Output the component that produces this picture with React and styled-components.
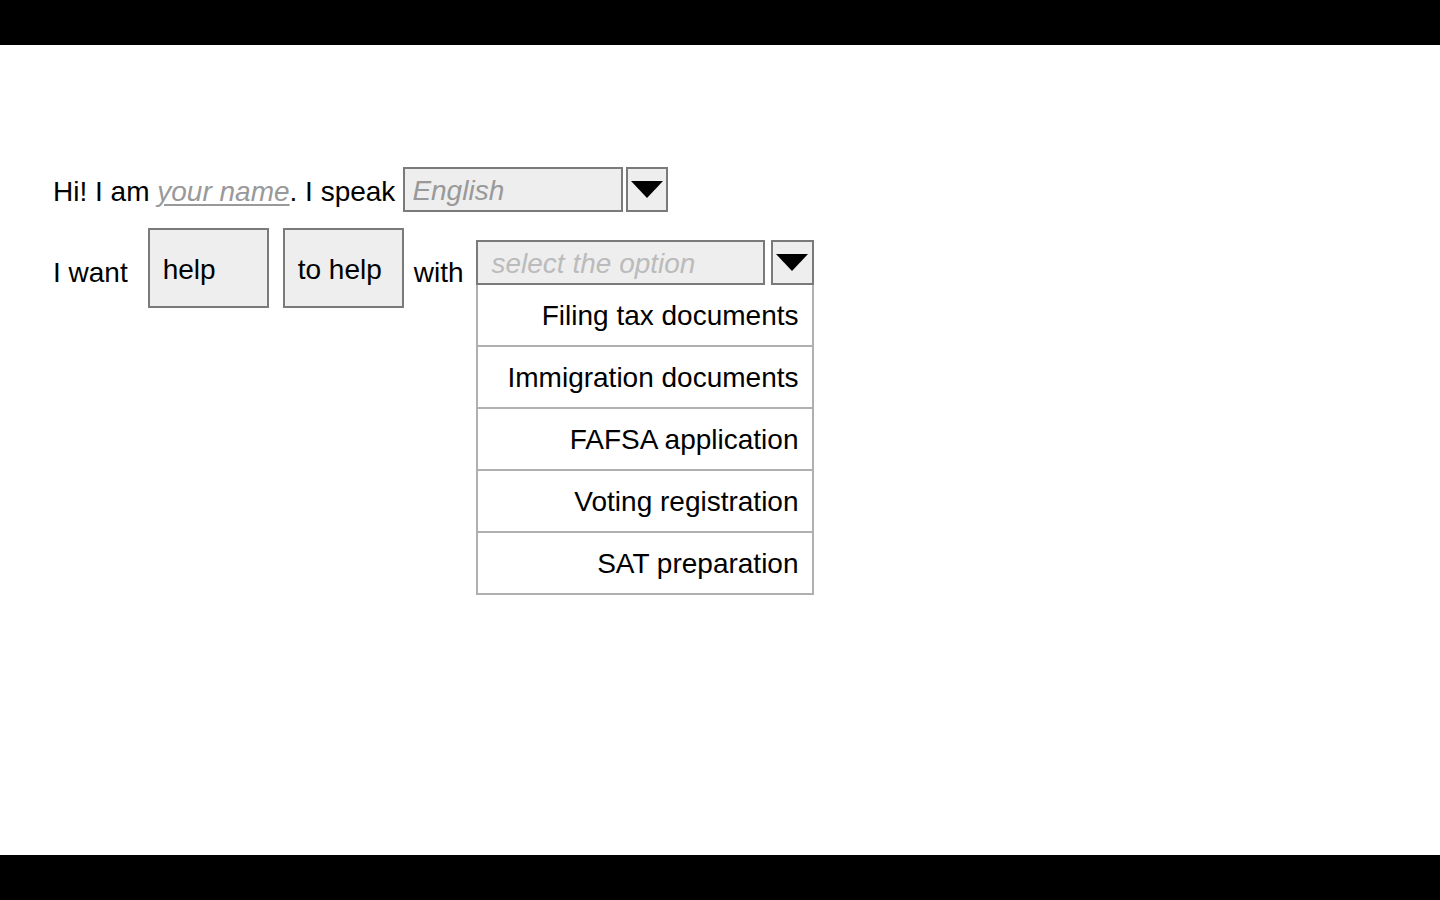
import React from "react";
import styled, { createGlobalStyle } from "styled-components";

const Global = createGlobalStyle`
  html, body { margin: 0; padding: 0; background: #000; }
  body { font-family: "Liberation Sans", Arial, Helvetica, sans-serif; }
  * { box-sizing: border-box; }
`;

const Page = styled.div`
  width: 1440px;
  height: 900px;
  display: flex;
  flex-direction: column;
  background: #000;
`;

const Bar = styled.div`
  height: 45px;
  flex: none;
  background: #000;
`;

const Stage = styled.main`
  flex: 1;
  background: #fff;
  padding: 122px 0 0 53px;
  display: flex;
  flex-direction: column;
  gap: 16px;
  font-size: 28px;
  line-height: 32px;
  color: #000;
`;

const Row = styled.div`
  display: flex;
  align-items: ${(p) => p.$align || "center"};
`;

const Text = styled.span`
  white-space: pre;
  flex: none;
  margin-top: ${(p) => p.$top || 0}px;
  margin-right: ${(p) => p.$gap || 0}px;
`;

const NameField = styled.span`
  font-style: italic;
  color: #999;
  text-decoration: underline;
  text-decoration-thickness: 2px;
  text-underline-offset: 3px;
`;

const Field = styled.div`
  flex: none;
  width: ${(p) => p.$w}px;
  height: 45px;
  border: 2px solid #7a7a7a;
  background: #eee;
  display: flex;
  align-items: center;
  padding-left: ${(p) => p.$pad}px;
  padding-top: 3px;
  font-style: italic;
  color: ${(p) => p.$color};
`;

const ArrowBox = styled.div`
  flex: none;
  width: ${(p) => p.$w}px;
  height: 45px;
  border: 2px solid #7a7a7a;
  background: #eee;
  margin-left: ${(p) => p.$gap}px;
  display: flex;
  align-items: center;
  justify-content: center;
`;

const Choice = styled.div`
  flex: none;
  width: 121px;
  height: 80px;
  border: 2px solid #7a7a7a;
  background: #eee;
  padding: 24px 0 0 13px;
  margin-right: ${(p) => p.$gap}px;
`;

const SelectWrap = styled.div`
  position: relative;
  flex: none;
  margin-top: 12px;
  width: 338px;
`;

const SelectRow = styled.div`
  display: flex;
`;

const Menu = styled.ul`
  position: absolute;
  top: 45px;
  left: 0;
  width: 338px;
  margin: 0;
  padding: 0;
  list-style: none;
  border-left: 2px solid #b0b0b0;
  border-right: 2px solid #b0b0b0;
  background: #fff;
`;

const MenuItem = styled.li`
  height: 62px;
  border-bottom: 2px solid #b0b0b0;
  display: flex;
  align-items: center;
  justify-content: flex-end;
  padding-right: 13px;
  padding-top: 2px;
`;

const Caret = () => (
  <svg width="32" height="17" viewBox="0 0 32 17">
    <polygon points="0,0 32,0 16,17" fill="#000" />
  </svg>
);

const options = [
  "Filing tax documents",
  "Immigration documents",
  "FAFSA application",
  "Voting registration",
  "SAT preparation",
];

export default function App() {
  return (
    <>
      <Global />
      <Page>
        <Bar />
        <Stage>
          <Row>
            <Text $top={4} $gap={8}>
              Hi! I am <NameField>your name</NameField>. I speak
            </Text>
            <Field $w={220} $pad={7} $color="#999">English</Field>
            <ArrowBox $w={42} $gap={3}>
              <Caret />
            </ArrowBox>
          </Row>
          <Row $align="flex-start">
            <Text $top={29} $gap={20}>I want</Text>
            <Choice $gap={14}>help</Choice>
            <Choice $gap={10}>to help</Choice>
            <Text $top={29} $gap={12}>with</Text>
            <SelectWrap>
              <SelectRow>
                <Field $w={289} $pad={14} $color="#bbb">select the option</Field>
                <ArrowBox $w={43} $gap={6}>
                  <Caret />
                </ArrowBox>
              </SelectRow>
              <Menu>
                {options.map((o) => (
                  <MenuItem key={o}>{o}</MenuItem>
                ))}
              </Menu>
            </SelectWrap>
          </Row>
        </Stage>
        <Bar />
      </Page>
    </>
  );
}
